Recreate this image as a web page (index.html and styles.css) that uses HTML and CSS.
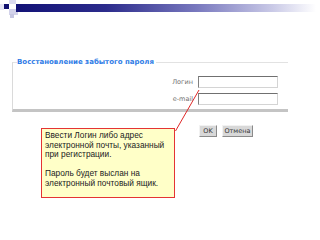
FILE: index.html
```html
<!DOCTYPE html>
<html lang="ru">
<head>
    <meta charset="UTF-8">
    <meta name="viewport" content="width=device-width, initial-scale=1.0">
    <title>Восстановление забытого пароля</title>
    <link rel="stylesheet" href="styles.css">
</head>
<body>

<div class="slide">
    <!-- Slide header decoration -->
    <svg class="slide-header" width="320" height="20" viewBox="0 0 320 20">
        <defs>
            <linearGradient id="barFade" x1="0" x2="1" y1="0" y2="0">
                <stop offset="0" stop-color="#121276"/>
                <stop offset="0.3" stop-color="#2c2c8c"/>
                <stop offset="0.6" stop-color="#7878be"/>
                <stop offset="0.85" stop-color="#c8c8e6"/>
                <stop offset="1" stop-color="#ffffff"/>
            </linearGradient>
        </defs>
        <rect x="9" y="0" width="7" height="4" fill="#dcdcf0"/>
        <rect x="0" y="4" width="4" height="6" fill="#e4e4f4"/>
        <rect x="9" y="9" width="9" height="6" fill="#d2d2ea"/>
        <rect x="10" y="14" width="4" height="4" fill="#c6c6e2"/>
        <rect x="4" y="4" width="5" height="5" fill="#101070"/>
        <rect x="16" y="4" width="300" height="8" fill="url(#barFade)"/>
    </svg>

    <!-- Form panel -->
    <fieldset class="recover-panel">
        <legend class="recover-title">Восстановление забытого пароля</legend>
        <div class="field-row">
            <label class="field-label">Логин</label>
            <input class="field-input" type="text">
        </div>
        <div class="field-row">
            <label class="field-label">e-mail</label>
            <input class="field-input" type="text">
        </div>
    </fieldset>

    <!-- Note and buttons -->
    <div class="bottom-row">
        <div class="note-box">
            <p>Ввести Логин либо адрес<br>электронной почты, указанный<br>при регистрации.</p>
            <p>Пароль будет выслан на<br>электронный почтовый ящик.</p>
        </div>
        <div class="buttons">
            <button class="form-button ok-button">OK</button>
            <button class="form-button">Отмена</button>
        </div>
    </div>

    <!-- Callout line from the note to the form -->
    <svg class="callout-line" width="320" height="240" viewBox="0 0 320 240">
        <line x1="199" y1="90" x2="175.5" y2="131" stroke="#e02828" stroke-width="1"/>
    </svg>
</div>

</body>
</html>
```

FILE: styles.css
```css
/* Page */
body {
    margin: 0;
    background: #fff;
    font-family: "Liberation Sans", Arial, sans-serif;
}

.slide {
    position: relative;
    width: 320px;
    height: 240px;
    overflow: hidden;
}

.slide-header {
    display: block;
}

/* Form panel */
.recover-panel {
    margin: 38px 32px 0 12px;
    padding: 9px 10px 4px 4px;
    border-style: solid;
    border-width: 1px 0 3px 1px;
    border-color: #e2e2e2 transparent #c4c4c4 #dadada;
    min-width: 0;
}

.recover-title {
    padding: 0 2px 0 0;
    font-family: "DejaVu Sans", Verdana, sans-serif;
    font-size: 7px;
    line-height: 9px;
    font-weight: bold;
    color: #2f7ce6;
}

.field-row {
    display: flex;
    justify-content: flex-end;
    align-items: center;
    gap: 5px;
}

.field-row + .field-row {
    margin-top: 5px;
}

.field-label {
    font-family: "DejaVu Sans", Verdana, sans-serif;
    font-size: 6.5px;
    color: #707070;
}

.field-input {
    box-sizing: border-box;
    width: 80px;
    height: 12px;
    margin: 0;
    padding: 0;
    border: 1px solid;
    border-color: #707070 #d4d4d4 #d4d4d4 #808080;
    background: #fff;
}

/* Note and buttons */
.bottom-row {
    display: flex;
    align-items: flex-start;
    margin-top: 13px;
}

.note-box {
    box-sizing: border-box;
    width: 134px;
    margin: 3px 0 0 41px;
    padding: 2px 3px 9px 3px;
    background: #ffffc8;
    border: 1px solid #e43434;
    font-size: 8.3px;
    line-height: 9.5px;
    color: #222;
}

.note-box p {
    margin: 0;
}

.note-box p + p {
    margin-top: 9.5px;
}

.buttons {
    display: flex;
    gap: 5px;
    margin-left: 24px;
}

.form-button {
    box-sizing: border-box;
    width: 31px;
    height: 12px;
    padding: 0;
    background: #d8d8d8;
    border: 1px solid;
    border-color: #f2f2f2 #8a8a8a #8a8a8a #f2f2f2;
    font-family: "DejaVu Sans", Verdana, sans-serif;
    font-size: 6.5px;
    color: #333;
}

.ok-button {
    width: 18px;
}

/* Callout line lies over everything */
.callout-line {
    position: absolute;
    top: 0;
    left: 0;
    pointer-events: none;
}
```
